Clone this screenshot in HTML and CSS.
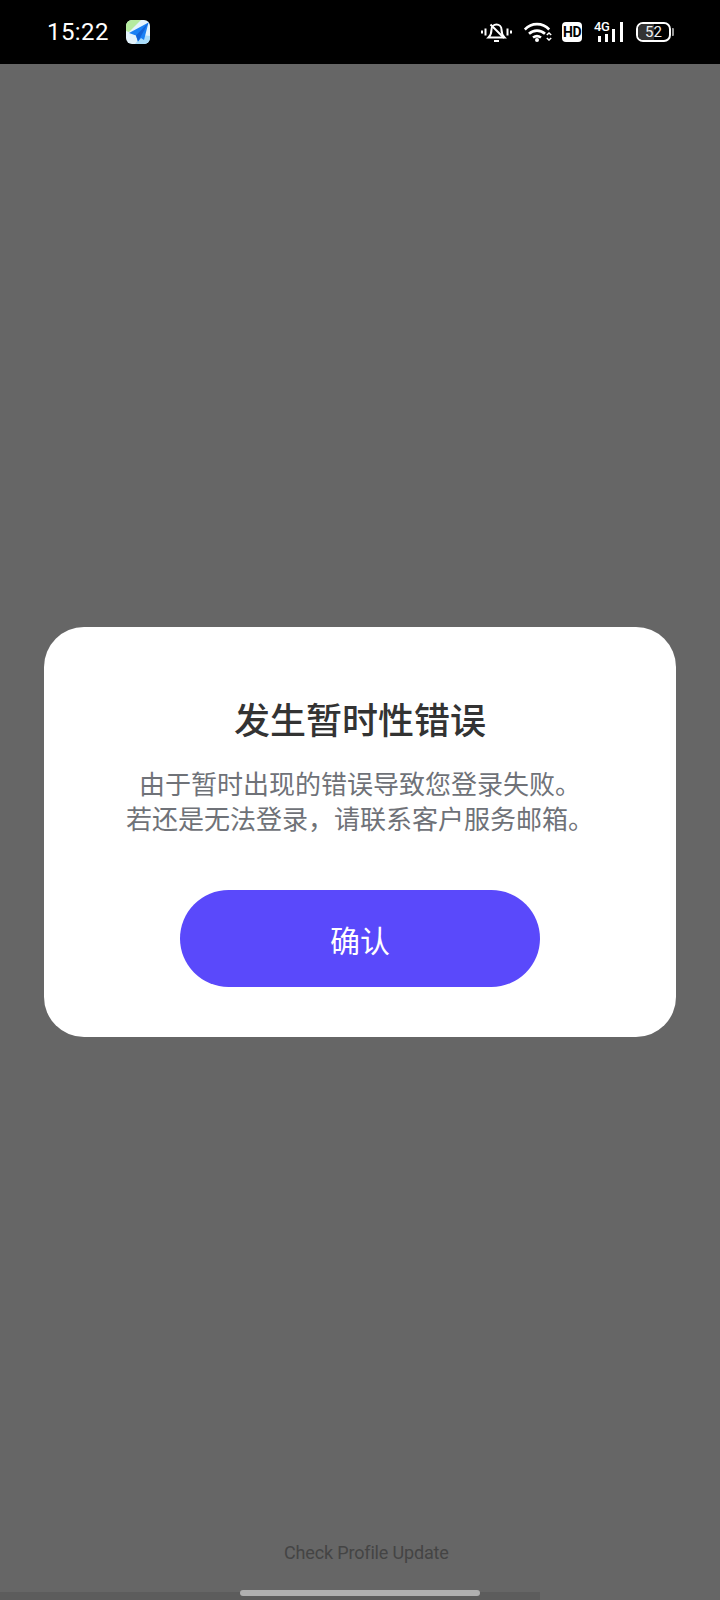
FILE: index.html
```html
<!DOCTYPE html>
<html lang="zh-CN">
<head>
<meta charset="utf-8">
<title>发生暂时性错误</title>
<link rel="stylesheet" href="styles.css">
</head>
<body>
<div class="screen">
  <header class="status">
    <div class="status-left">
      <span class="time">15:22</span>
      <svg class="app-icon" viewBox="0 0 24 24" width="24" height="24">
        <rect x="0" y="0" width="24" height="24" rx="6" fill="#e4f3fc"/>
        <path d="M0 6a6 6 0 0 1 6-6h9L3 12 0 11z" fill="#b5eb9e"/>
        <path d="M9 24l7-9 8 1v2a6 6 0 0 1-6 6z" fill="#a9dcfa"/>
        <path d="M22.500 2.500L3 13l7 2.500 2 6 3-3.500 3 2z" fill="#1a80f5"/>
        <path d="M10 15.500L22.500 2.500 12 21.500z" fill="#1263d8"/>
      </svg>
    </div>
    <div class="status-right">
      <svg class="ic-bell" viewBox="0 0 31 21" width="31" height="21" fill="none" stroke="#fff" stroke-width="2">
        <path d="M1 8.500v3M4.500 6.500v7M26.500 6.500v7M30 8.500v3"/>
        <path d="M7.500 15.500c2-2 3-4.500 3-8a5 5 0 0 1 10 0c0 3.500 1 6 3 8z"/>
        <path d="M13 19h5"/>
        <path d="M9.500 2.500L23 16"/>
      </svg>
      <svg class="ic-wifi" viewBox="0 0 28 20" width="28" height="20" fill="none" stroke="#fff" stroke-width="2.600">
        <path d="M.8 7.500C7.500 .3 18.500 .3 25.200 7.500"/>
        <path d="M5 11.800c4.500-4.300 11.500-4.300 16 0"/>
        <path d="M9 15.500c2.500-1.800 5.500-1.800 8 0"/>
        <circle cx="13" cy="18" r="2" fill="#fff" stroke="none"/>
        <path d="M22.800 13l2.200-2 2.200 2M22.800 16l2.200 2 2.200-2" stroke-width="1.500"/>
      </svg>
      <span class="hd">HD</span>
      <div class="net">
        <span class="net-label">4G</span>
        <svg class="ic-bars" viewBox="0 0 30 20" width="30" height="20" fill="#fff">
          <rect x="4" y="14" width="3" height="6"/>
          <rect x="11" y="12" width="3" height="8"/>
          <rect x="18" y="7" width="3" height="13"/>
          <rect x="26" y="0" width="3" height="20"/>
        </svg>
      </div>
      <div class="battery">
        <div class="battery-body">
          <span class="battery-fill"></span>
          <span class="battery-num">52</span>
        </div>
        <span class="battery-cap"></span>
      </div>
    </div>
  </header>
  <main class="backdrop">
    <section class="dialog">
      <h1 class="dialog-title">发生暂时性错误</h1>
      <p class="dialog-text">由于暂时出现的错误导致您登录失败。<br>若还是无法登录，请联系客户服务邮箱。</p>
      <button class="dialog-btn">确认</button>
    </section>
    <div class="footer-text">Check Profile Update</div>
    <div class="nav-strip"></div>
    <div class="home-bar"></div>
  </main>
</div>
</body>
</html>
```
FILE: styles.css
```css
* { box-sizing: border-box; }
html, body { margin: 0; padding: 0; }
body { width: 720px; height: 1600px; background: #666; font-family: Roboto, "Noto Sans CJK SC", sans-serif; overflow: hidden; }
.screen { width: 720px; height: 1600px; display: flex; flex-direction: column; }
.status { height: 64px; flex: none; background: #000; display: flex; align-items: center; justify-content: space-between; padding: 0 46px 0 47px; color: #fff; }
.status-left { display: flex; align-items: center; gap: 17px; }
.time { font-size: 24px; line-height: 28px; letter-spacing: 0.4px; }
.app-icon { display: block; }
.status-right { display: flex; align-items: center; }
.ic-bell { display: block; margin-right: 12px; }
.ic-wifi { display: block; margin-right: 10px; }
.hd { width: 20px; height: 20px; border-radius: 4px; background: #fff; color: #000; font: 700 14px/20px "Roboto", sans-serif; text-align: center; margin-right: 12px; letter-spacing: -0.6px; }
.net { position: relative; width: 30px; height: 20px; margin-right: 12px; }
.net-label { position: absolute; left: 0; top: -1px; font: 500 13px/12px Roboto, sans-serif; letter-spacing: -0.5px; color: #fff; }
.ic-bars { display: block; }
.battery { display: flex; align-items: center; gap: 1px; }
.battery-body { position: relative; width: 35px; height: 20px; border: 2px solid #fff; border-radius: 7px; overflow: hidden; display: flex; align-items: center; justify-content: center; }
.battery-fill { position: absolute; left: 0; top: 0; bottom: 0; width: 52%; background: #333; }
.battery-num { position: relative; font-size: 15px; line-height: 16px; color: #eee; }
.battery-cap { width: 2px; height: 8px; background: #999; border-radius: 0 1px 1px 0; }
.backdrop { position: relative; flex: 1; background: #666; display: flex; align-items: center; justify-content: center; }
.dialog { width: 632px; height: 410px; background: #fff; border-radius: 40px; display: flex; flex-direction: column; align-items: center; padding-top: 64px; }
.dialog-title { margin: 0; font: 500 36px/54px "Noto Sans CJK SC", sans-serif; color: #333; }
.dialog-text { margin: 20px 0 0; font: 400 26px/35px "Noto Sans CJK SC", sans-serif; color: #6f7278; text-align: center; }
.dialog-btn { margin-top: 55px; width: 360px; height: 97px; border: 0; border-radius: 48.500px; background: #5a49fb; color: #fff; font: 400 30px/40px "Noto Sans CJK SC", sans-serif; }
.footer-text { position: absolute; left: 284px; bottom: 35px; font-size: 18px; line-height: 24px; letter-spacing: -0.16px; color: #444; }
.nav-strip { position: absolute; left: 0; bottom: 0; width: 540px; height: 8px; background: #5c5c5c; }
.home-bar { position: absolute; left: 240px; bottom: 4px; width: 240px; height: 6px; border-radius: 3px; background: #b0b0b0; }
```
